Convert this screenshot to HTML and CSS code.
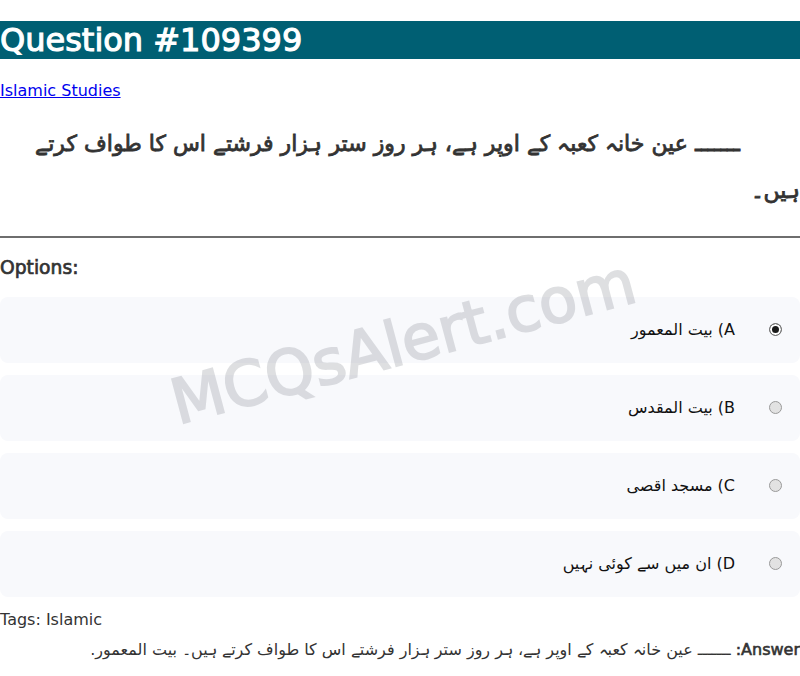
FILE: index.html
```html
<!DOCTYPE html>
<html lang="en">
<head>
<meta charset="utf-8">
<title>Question #109399</title>
<link rel="stylesheet" href="styles.css">
</head>
<body>
<h1 class="title">Question #109399</h1>
<a class="category" href="#">Islamic Studies</a>
<p class="question" dir="rtl">ـــــــ عین خانہ کعبہ کے اوپر ہے، ہر روز ستر ہزار فرشتے اس کا طواف کرتے ہیں۔</p>
<hr class="divider">
<h3 class="options-title">Options:</h3>
<div class="options">
  <div class="option" dir="rtl"><span class="radio checked"></span><span class="option-text">A) بیت المعمور</span></div>
  <div class="option" dir="rtl"><span class="radio"></span><span class="option-text">B) بیت المقدس</span></div>
  <div class="option" dir="rtl"><span class="radio"></span><span class="option-text">C) مسجد اقصی</span></div>
  <div class="option" dir="rtl"><span class="radio"></span><span class="option-text">D) ان میں سے کوئی نہیں</span></div>
</div>
<p class="tags">Tags: Islamic</p>
<p class="answer" dir="rtl"><strong class="answer-label">Answer:</strong> ـــــــ عین خانہ کعبہ کے اوپر ہے، ہر روز ستر ہزار فرشتے اس کا طواف کرتے ہیں۔ بیت المعمور.</p>
<div class="watermark">MCQsAlert.com</div>
</body>
</html>
```
FILE: styles.css
```css
html, body {
  margin: 0;
  padding: 0;
  background: #ffffff;
}
body {
  font-family: "DejaVu Sans", sans-serif;
  font-size: 16px;
  color: #333333;
  position: relative;
  overflow: hidden;
  height: 676px;
}
.title {
  margin: 21.44px 0;
  font-size: 32px;
  font-weight: normal;
  -webkit-text-stroke: 1.1px #ffffff;
  background: #005f73;
  color: #ffffff;
}
.category {
  display: block;
  color: #0000ee;
  text-decoration: underline;
  width: max-content;
}
.question {
  margin: 20px 0 22px;
  font-size: 22px;
  font-weight: normal;
  -webkit-text-stroke: 0.8px #333333;
  line-height: 47px;
  text-align: right;
  text-indent: 60px;
  color: #333333;
}
.divider {
  margin: 0;
  border: 0;
  border-top: 2px solid #6e6e6e;
}
.options-title {
  margin: 19px 0;
  font-size: 18.72px;
  font-weight: normal;
  -webkit-text-stroke: 0.7px #333333;
  color: #333333;
}
.options {
  display: flex;
  flex-direction: column;
  gap: 12px;
}
.option {
  display: flex;
  align-items: center;
  gap: 34px;
  height: 66px;
  padding: 0 18px;
  background: #f8f9fc;
  border-radius: 8px;
  color: #111111;
}
.radio {
  box-sizing: border-box;
  width: 13px;
  height: 13px;
  border-radius: 50%;
  border: 1px solid #9a9a9a;
  background: #e2e2e2;
  flex: none;
}
.radio.checked {
  background: #1a1a1a;
  border: 1px solid #777777;
  box-shadow: inset 0 0 0 2px #ffffff;
}
.tags {
  margin: 13px 0 0;
}
.answer {
  margin: 11px 0 0;
  text-align: right;
}
.answer-label {
  font-weight: normal;
  -webkit-text-stroke: 0.6px #333333;
}
.watermark {
  position: absolute;
  left: 403px;
  top: 342px;
  transform: translate(-50%, -50%) rotate(-15deg);
  font-size: 62px;
  font-weight: normal;
  color: rgb(120, 125, 135);
  -webkit-text-stroke: 2px rgb(120, 125, 135);
  opacity: 0.24;
  white-space: nowrap;
  pointer-events: none;
}
```
